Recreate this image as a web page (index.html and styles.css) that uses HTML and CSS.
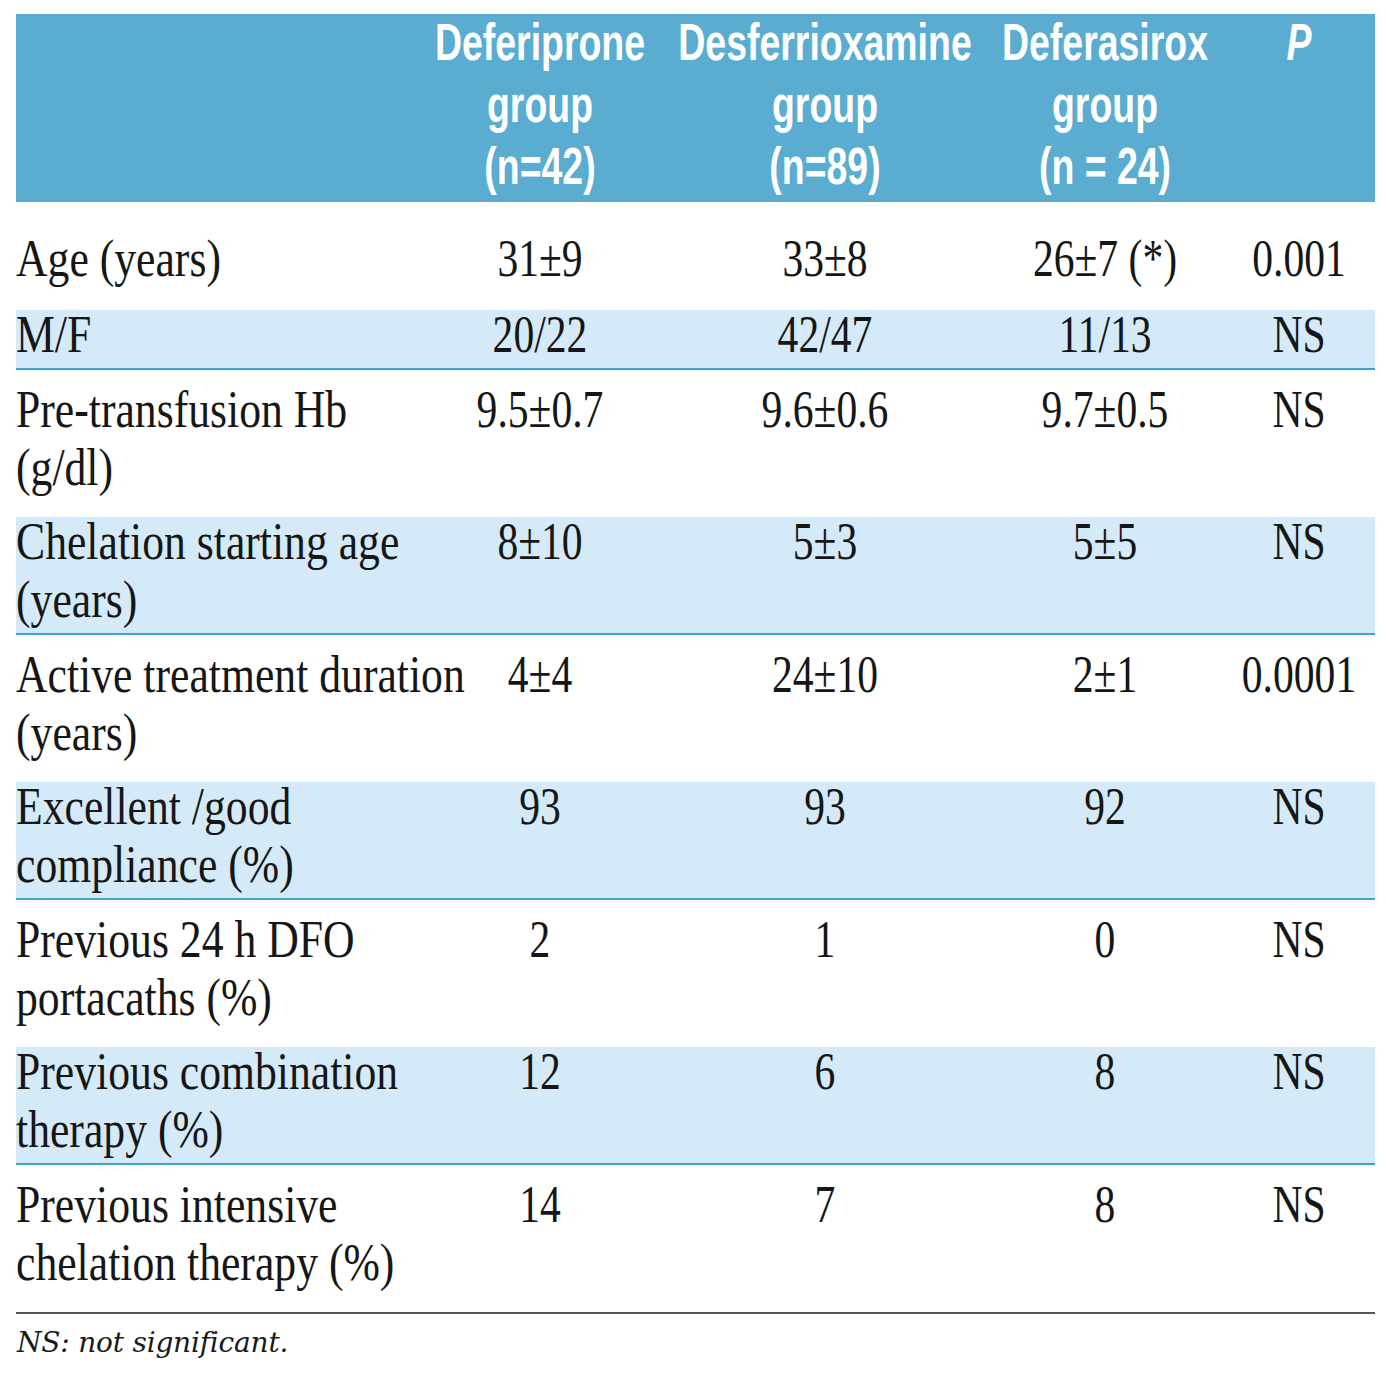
FILE: index.html
```html
<!DOCTYPE html>
<html lang="en">
<head>
<meta charset="utf-8">
<title>Patient characteristics by chelation group</title>
<link rel="stylesheet" href="styles.css">
</head>
<body>
<div class="page">
  <table class="tbl">
    <colgroup>
      <col class="c-label">
      <col class="c-1">
      <col class="c-2">
      <col class="c-3">
      <col class="c-4">
    </colgroup>
    <thead>
      <tr class="h">
        <th class="lab"></th>
        <th class="grp"><span class="t">Deferiprone<br>group<br>(n=42)</span></th>
        <th class="grp"><span class="t">Desferrioxamine<br>group<br>(n=89)</span></th>
        <th class="grp"><span class="t">Deferasirox<br>group<br>(n = 24)</span></th>
        <th class="p"><span class="t"><i>P</i></span></th>
      </tr>
    </thead>
    <tbody>
      <tr class="w first">
        <td class="lab"><span class="t">Age (years)</span></td>
        <td class="num"><span class="t">31±9</span></td>
        <td class="num"><span class="t">33±8</span></td>
        <td class="num"><span class="t">26±7 (*)</span></td>
        <td class="num p"><span class="t">0.001</span></td>
      </tr>
      <tr class="l">
        <td class="lab"><span class="t">M/F</span></td>
        <td class="num"><span class="t">20/22</span></td>
        <td class="num"><span class="t">42/47</span></td>
        <td class="num"><span class="t">11/13</span></td>
        <td class="num p"><span class="t">NS</span></td>
      </tr>
      <tr class="w">
        <td class="lab"><span class="t">Pre-transfusion Hb<br>(g/dl)</span></td>
        <td class="num"><span class="t">9.5±0.7</span></td>
        <td class="num"><span class="t">9.6±0.6</span></td>
        <td class="num"><span class="t">9.7±0.5</span></td>
        <td class="num p"><span class="t">NS</span></td>
      </tr>
      <tr class="l">
        <td class="lab"><span class="t">Chelation starting age<br>(years)</span></td>
        <td class="num"><span class="t">8±10</span></td>
        <td class="num"><span class="t">5±3</span></td>
        <td class="num"><span class="t">5±5</span></td>
        <td class="num p"><span class="t">NS</span></td>
      </tr>
      <tr class="w">
        <td class="lab"><span class="t">Active treatment duration<br>(years)</span></td>
        <td class="num"><span class="t">4±4</span></td>
        <td class="num"><span class="t">24±10</span></td>
        <td class="num"><span class="t">2±1</span></td>
        <td class="num p"><span class="t">0.0001</span></td>
      </tr>
      <tr class="l">
        <td class="lab"><span class="t">Excellent /good<br>compliance (%)</span></td>
        <td class="num"><span class="t">93</span></td>
        <td class="num"><span class="t">93</span></td>
        <td class="num"><span class="t">92</span></td>
        <td class="num p"><span class="t">NS</span></td>
      </tr>
      <tr class="w">
        <td class="lab"><span class="t">Previous 24 h DFO<br>portacaths (%)</span></td>
        <td class="num"><span class="t">2</span></td>
        <td class="num"><span class="t">1</span></td>
        <td class="num"><span class="t">0</span></td>
        <td class="num p"><span class="t">NS</span></td>
      </tr>
      <tr class="l">
        <td class="lab"><span class="t">Previous combination<br>therapy (%)</span></td>
        <td class="num"><span class="t">12</span></td>
        <td class="num"><span class="t">6</span></td>
        <td class="num"><span class="t">8</span></td>
        <td class="num p"><span class="t">NS</span></td>
      </tr>
      <tr class="w last">
        <td class="lab"><span class="t">Previous intensive<br>chelation therapy (%)</span></td>
        <td class="num"><span class="t">14</span></td>
        <td class="num"><span class="t">7</span></td>
        <td class="num"><span class="t">8</span></td>
        <td class="num p"><span class="t">NS</span></td>
      </tr>
    </tbody>
  </table>
  <p class="note">NS: not significant.</p>
</div>
</body>
</html>
```
FILE: styles.css
```css
html, body {
  margin: 0;
  padding: 0;
  background: #ffffff;
}

.page {
  padding: 14px 11px 0 16px;
}

.tbl {
  width: 1359px;
  border-collapse: collapse;
  table-layout: fixed;
  font-family: "Liberation Serif", "Times New Roman", serif;
  font-size: 52px;
  line-height: 58px;
  color: #161616;
}

.c-label { width: 414px; }
.c-1 { width: 220px; }
.c-2 { width: 350px; }
.c-3 { width: 210px; }
.c-4 { width: 165px; }

.tbl th,
.tbl td {
  padding: 0;
  vertical-align: top;
  font-weight: normal;
}

/* text is set in a condensed width */
.t {
  display: block;
  white-space: nowrap;
  transform-origin: 50% 0;
  transform: scaleX(0.8);
}

/* header */
.h th {
  background: #5aadd0;
  color: #ffffff;
  font-family: "Liberation Sans", Arial, sans-serif;
  font-weight: bold;
  font-size: 52px;
  line-height: 62px;
  text-align: center;
  padding-bottom: 5px;
}

.h .t {
  transform: scaleX(0.72);
  margin-top: -3px;
}

/* long group names: widen the block on both sides so it stays centred */
.h .grp .t {
  margin-left: -110px;
  margin-right: -110px;
}

.h i {
  font-style: italic;
}

.tbl .p {
  padding-left: 13px;
}

/* body */
.lab {
  text-align: left;
}

.tbl td.lab .t {
  transform-origin: 0 0;
  transform: scaleX(0.84);
}

.num {
  text-align: center;
}

.w td {
  padding-top: 11px;
  padding-bottom: 20px;
}

.first td {
  padding-top: 28px;
  padding-bottom: 22px;
}

.l td {
  background: #d5eaf8;
  border-bottom: 2px solid #3ea2d2;
  padding-bottom: 4px;
}

.l .t {
  margin-top: -4px;
}

.last td {
  border-bottom: 2px solid #555555;
}

.note {
  margin: 13px 0 0 1px;
  font-family: "DejaVu Serif", "Liberation Serif", serif;
  font-style: italic;
  font-size: 28px;
  line-height: 32px;
  letter-spacing: -0.2px;
  color: #1a1a1a;
}
```
